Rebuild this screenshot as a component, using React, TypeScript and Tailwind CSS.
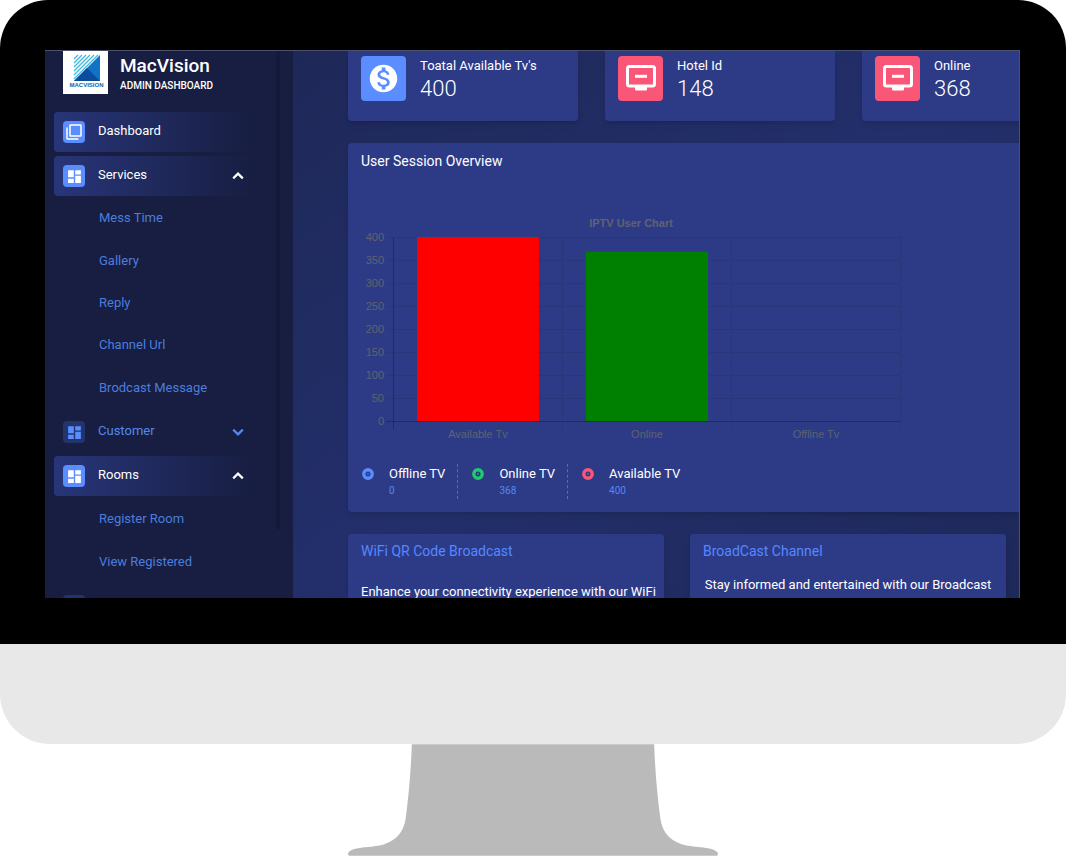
import type { ReactNode } from "react";
import { MdDashboard, MdMonetizationOn } from "react-icons/md";

function Logo() {
  return (
    <svg viewBox="0 0 45 43" className="h-[43px] w-[45px] shrink-0 bg-white" role="img" aria-label="MacVision logo">
      <path d="M37 4V30H11Z" fill="#1173c6" />
      <path d="M24 17L37 30H11Z" fill="#0b4c9c" />
      <g stroke="#3fb9dc" strokeWidth="1.3">
        <path d="M11 8L15 4M11 12L19 4M11 16L23 4M11 20L27 4M11 24L31 4M11 28L35 4" />
      </g>
      <text x="23.5" y="36" textAnchor="middle" fontFamily="Liberation Sans, sans-serif" fontWeight="700" fontSize="6" fill="#1762ac">
        MACVISION
      </text>
    </svg>
  );
}

function PagesIcon() {
  return (
    <svg viewBox="0 0 16 16" className="size-4" fill="none" stroke="currentColor" strokeWidth="1.5" aria-hidden="true">
      <rect x="4" y="1" width="11" height="11" rx="0.6" />
      <path d="M1 3.6V14.2Q1 15 1.8 15H12.4" />
    </svg>
  );
}

function Chevron({ direction }: { direction: "up" | "down" }) {
  return (
    <svg viewBox="0 0 22 22" className="size-[22px]" fill="none" stroke="currentColor" strokeWidth="2.2" aria-hidden="true">
      <path d={direction === "up" ? "M6.2 13.4L11 8.6L15.8 13.4" : "M6.2 8.6L11 13.4L15.8 8.6"} />
    </svg>
  );
}

function ScreenIcon() {
  return (
    <svg viewBox="0 0 30 26" className="mt-[-2px] ml-px h-[26px] w-[30px]" aria-hidden="true">
      <rect x="1.5" y="1.5" width="27" height="19.5" rx="2" fill="none" stroke="currentColor" strokeWidth="3" />
      <rect x="9" y="21" width="12" height="4.5" rx="1" fill="currentColor" />
      <rect x="9" y="9.8" width="12" height="3" fill="currentColor" />
    </svg>
  );
}

type NavProps = { label?: string; icon: ReactNode; active?: boolean; arrow?: "up" | "down" };

function NavItem({ label, icon, active, arrow }: NavProps) {
  return (
    <button
      type="button"
      aria-label={label ?? "More"}
      className={
        "flex h-10 w-full items-center rounded pl-[9px] pr-[7px] text-left " +
        (active ? "bg-linear-to-r from-[#283579] to-[#171e41] text-white" : "text-[#5488ee]")
      }
    >
      <span
        className={
          "flex size-[22px] items-center justify-center rounded-sm text-[17px] " +
          (active ? "bg-[#5a8dff] text-white" : "bg-[#23346a] text-[#5a8dff]")
        }
      >
        {icon}
      </span>
      <span className="ml-[13px] flex-1 pb-[2px] text-[13px]">{label}</span>
      {arrow && <Chevron direction={arrow} />}
    </button>
  );
}

function SubItems({ items, className }: { items: string[]; className: string }) {
  return (
    <ul className={"grid auto-rows-fr " + className}>
      {items.map((item) => (
        <li key={item} className="flex items-center pl-[45px]">
          <a href="#" className="text-[13px] leading-[18px] text-[#4c7dde]">
            {item}
          </a>
        </li>
      ))}
    </ul>
  );
}

function Sidebar() {
  return (
    <aside className="flex w-[248px] shrink-0 bg-[#171e41]">
      <div className="flex-1 pl-[9px] pr-[20px]">
        <div className="flex h-[61px] pl-[9px]">
          <Logo />
          <div className="ml-3 pt-[3px]">
            <h1 className="text-[19px] leading-6 font-medium text-white">MacVision</h1>
            <p className="mt-px text-[10px] leading-[14px] font-medium text-white">ADMIN DASHBOARD</p>
          </div>
        </div>
        <nav>
          <div className="flex flex-col gap-1">
            <NavItem label="Dashboard" icon={<PagesIcon />} active />
            <NavItem label="Services" icon={<MdDashboard />} active arrow="up" />
          </div>
          <SubItems
            className="mb-[3px] h-[213px] pt-px"
            items={["Mess Time", "Gallery", "Reply", "Channel Url", "Brodcast Message"]}
          />
          <div className="flex flex-col gap-1">
            <NavItem label="Customer" icon={<MdDashboard />} arrow="down" />
            <NavItem label="Rooms" icon={<MdDashboard />} active arrow="up" />
          </div>
          <SubItems className="mb-[3px] h-[87px] pt-[2px]" items={["Register Room", "View Registered"]} />
          <NavItem icon={<MdDashboard />} />
        </nav>
      </div>
      <div className="mr-[13px] h-[478px] w-1 bg-[#131a38]" />
    </aside>
  );
}

function StatCard({ title, value, icon, tone }: { title: string; value: number; icon: ReactNode; tone: "blue" | "pink" }) {
  return (
    <section className="flex h-[70px] w-[230px] shrink-0 gap-[14px] rounded-b bg-[#2d3b87] pl-[13px] pt-[5px] shadow-md">
      <span
        className={
          "flex size-[45px] items-center justify-center rounded-sm text-white " +
          (tone === "blue" ? "bg-[#5a8dff]" : "bg-[#fa5677]")
        }
      >
        {icon}
      </span>
      <div className="pt-px">
        <h2 className="text-[13px] leading-[18px] text-white">{title}</h2>
        <p className="text-[22px] leading-[27px] font-light text-white">{value}</p>
      </div>
    </section>
  );
}

const ticks = [400, 350, 300, 250, 200, 150, 100, 50, 0];
const bars = [
  { label: "Available Tv", value: 400, color: "#ff0000" },
  { label: "Online", value: 368, color: "#008000" },
  { label: "Offline Tv", value: 0, color: "#0000ff" },
];

function BarChart() {
  return (
    <svg
      viewBox="0 0 545 230"
      className="mt-[41px] block h-[230px] w-[545px]"
      role="img"
      aria-label="IPTV User Chart"
      fontFamily="Liberation Sans, Arial, sans-serif"
      fontSize="11"
      fill="#5f6270"
    >
      <text x="270" y="16" textAnchor="middle" fontWeight="700">
        IPTV User Chart
      </text>
      {ticks.map((tick, i) => (
        <g key={tick}>
          <rect x="25" y={26 + i * 23} width="514" height="1" fill={tick === 0 ? "#202a66" : "#293679"} />
          <text x="23" y={30 + i * 23} textAnchor="end">
            {tick}
          </text>
        </g>
      ))}
      {[32, 201, 370, 539].map((x, i) => (
        <rect key={x} x={x} y="26" width="1" height="192" fill={i === 0 ? "#202a66" : "#293679"} />
      ))}
      {bars.map((bar, i) => (
        <g key={bar.label}>
          <rect x={56 + i * 169} y={210 - bar.value * 0.46} width="122" height={bar.value * 0.46} fill={bar.color} />
          <text x={117 + i * 169} y="227" textAnchor="middle">
            {bar.label}
          </text>
        </g>
      ))}
    </svg>
  );
}

function Legend({ label, value, ring, divided }: { label: string; value: number; ring: string; divided?: boolean }) {
  return (
    <li className={"flex h-[35px] " + (divided ? "mr-[14px] border-r border-dashed border-[#4a70cf] pr-3" : "")}>
      <svg viewBox="0 0 12 12" className="mt-1 size-3" aria-hidden="true">
        <circle cx="6" cy="6" r="4.2" fill="none" stroke={ring} strokeWidth="3.4" />
        <circle cx="6" cy="6" r="0.8" fill={ring} />
      </svg>
      <div className="ml-[15px] pt-px">
        <p className="text-[13px] leading-[18px] text-white">{label}</p>
        <p className="text-[10px] leading-4 text-[#5488ee]">{value}</p>
      </div>
    </li>
  );
}

function InfoCard({ title, children }: { title: string; children: ReactNode }) {
  return (
    <section className="h-40 w-[316px] shrink-0 rounded bg-[#2d3b87] px-[13px] pt-2 shadow-md">
      <h2 className="text-sm leading-[18px] text-[#5488ff]">{title}</h2>
      {children}
    </section>
  );
}

function Dashboard() {
  return (
    <main className="min-w-0 flex-1 overflow-hidden bg-linear-to-br from-[#1e2858] via-[#232f6b] to-[#1e2859] pl-[55px]">
      <div className="flex gap-[27px]">
        <StatCard title="Toatal Available Tv's" value={400} icon={<MdMonetizationOn size={33} />} tone="blue" />
        <StatCard title="Hotel Id" value={148} icon={<ScreenIcon />} tone="pink" />
        <StatCard title="Online" value={368} icon={<ScreenIcon />} tone="pink" />
      </div>
      <section className="mt-[22px] h-[369px] rounded-l bg-[#2d3b87] pl-[13px] pt-[9px] shadow-md">
        <h2 className="text-sm leading-[18px] text-white">User Session Overview</h2>
        <BarChart />
        <ul className="mt-[23px] ml-px flex">
          <Legend label="Offline TV" value={0} ring="#5a8dff" divided />
          <Legend label="Online TV" value={368} ring="#1fca6c" divided />
          <Legend label="Available TV" value={400} ring="#fa5677" />
        </ul>
      </section>
      <div className="mt-[22px] flex gap-[26px]">
        <InfoCard title="WiFi QR Code Broadcast">
          <p className="mt-[23px] whitespace-nowrap text-[13px] leading-[18px] text-white">
            Enhance your connectivity experience with our WiFi
          </p>
        </InfoCard>
        <InfoCard title="BroadCast Channel">
          <p className="mt-4 text-center text-[13px] leading-[18px] text-white">
            Stay informed and entertained with our Broadcast
          </p>
        </InfoCard>
      </div>
    </main>
  );
}

export default function App() {
  return (
    <div className="min-h-screen overflow-hidden bg-white font-['Roboto',sans-serif]">
      <div className="rounded-t-[48px] bg-black pt-[50px] pr-[46px] pb-[46px] pl-[45px]">
        <div className="flex h-[548px] overflow-hidden border-t border-r border-[#4b506c]">
          <Sidebar />
          <Dashboard />
        </div>
      </div>
      <div className="h-[100px] rounded-b-[50px] bg-[#e8e8e8]" />
      <svg viewBox="0 0 371 112" className="mx-auto block h-28 w-[370px]" aria-hidden="true">
        <path
          d="M64 0H307C308 28 310 50 313 73C315 90 325 97 334 100C345 104 364 102 370 108Q372 110 370 112H1Q-1 110 1 108C7 102 26 104 37 100C46 97 56 90 58 73C61 50 63 28 64 0Z"
          fill="#bababa"
        />
      </svg>
    </div>
  );
}
